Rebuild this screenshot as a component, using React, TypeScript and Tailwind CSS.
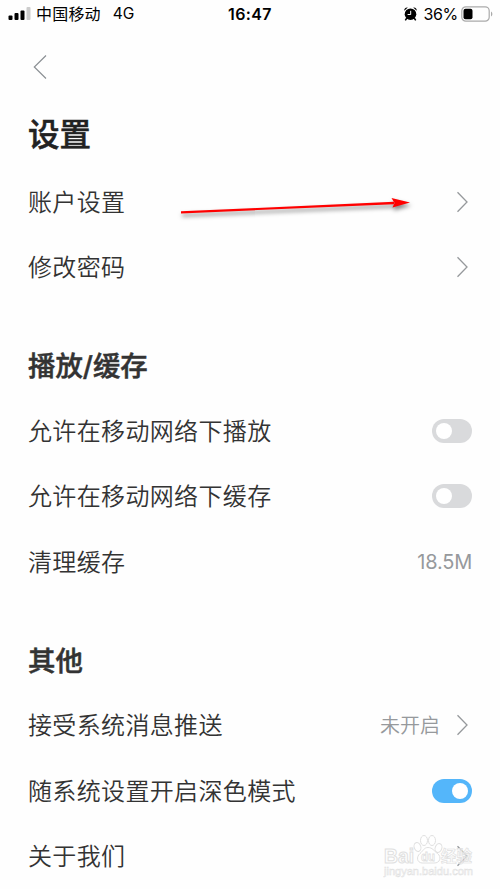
import type { ReactNode } from "react";

interface RowProps {
  label: string;
  children?: ReactNode;
}

export default function App() {
  return (
    <div className="relative flex h-[889px] w-[500px] flex-col overflow-hidden bg-[#fefefe] font-['Inter','Noto_Sans_CJK_SC',sans-serif] text-[#333]">
      <StatusBar />

      <header className="flex h-[73px] shrink-0 items-center pt-[5px] pl-[33px]">
        <button type="button" aria-label="返回">
          <svg width="14" height="26" viewBox="0 0 14 26" fill="none" stroke="#8b9094" strokeWidth="1.2">
            <path d="M13 1.500 1.300 13 13 24.500" />
          </svg>
        </button>
      </header>

      <main className="flex flex-col gap-[33px] pr-7 pl-7">
        <section>
          <h1 className="flex h-[68px] items-center text-[31.5px] font-medium text-[#222] [-webkit-text-stroke:0.5px]">
            设置
          </h1>
          <Row label="账户设置">
            <Chevron />
          </Row>
          <Row label="修改密码">
            <Chevron />
          </Row>
        </section>

        <section>
          <Heading>播放/缓存</Heading>
          <Row label="允许在移动网络下播放">
            <Toggle />
          </Row>
          <Row label="允许在移动网络下缓存">
            <Toggle />
          </Row>
          <Row label="清理缓存">
            <span className="text-[20px] tracking-[-0.2px] text-[#96999c]">18.5M</span>
          </Row>
        </section>

        <section>
          <Heading>其他</Heading>
          <Row label="接受系统消息推送">
            <span className="mr-[15px] pt-[2px] text-[20px] font-[350] text-[#96999c]">未开启</span>
            <Chevron />
          </Row>
          <Row label="随系统设置开启深色模式">
            <Toggle on />
          </Row>
          <Row label="关于我们">
            <Chevron />
          </Row>
        </section>
      </main>

      <Arrow />
      <Watermark />
    </div>
  );
}

function StatusBar() {
  return (
    <div className="grid h-7 shrink-0 grid-cols-[1fr_auto_1fr] items-center text-[16px] leading-7 text-black">
      <div className="flex items-center pl-2">
        <svg width="23" height="14" viewBox="0 0 23 14">
          <rect x="0.5" y="8.5" width="4" height="4.5" rx="1" />
          <rect x="6.5" y="6" width="4" height="7" rx="1" />
          <rect x="12.5" y="3.5" width="4" height="9.5" rx="1" />
          <rect x="18.5" y="0" width="4" height="13" rx="1" fill="#ccc" />
        </svg>
        <span className="ml-[5px] tracking-[0.2px]">中国移动</span>
        <span className="ml-[12px] text-[15.5px]">4G</span>
      </div>
      <span className="font-semibold tracking-[0.4px]">16:47</span>
      <div className="flex items-center justify-end pr-[6px]">
        <AlarmIcon />
        <span className="ml-[6px] tracking-[-0.3px]">36%</span>
        <svg className="ml-[3px]" width="33" height="16" viewBox="0 0 33 16">
          <rect x="0.8" y="0.8" width="27.4" height="14.4" rx="4" fill="none" stroke="#aaa" strokeWidth="1.2" />
          <rect x="2.5" y="2.7" width="9" height="10.6" rx="2" />
          <path d="M30 5.500c1.800.7 1.800 4.300 0 5z" fill="#aaa" />
        </svg>
      </div>
    </div>
  );
}

function AlarmIcon() {
  return (
    <svg width="13" height="14" viewBox="0 0 13 14">
      <circle cx="6.5" cy="7.2" r="5.8" />
      <path d="M.3 3.800C0 1.500 1.500.2 3.800.5zM12.700 3.800C13 1.500 11.500.2 9.200.5z" />
      <path d="m2.800 11-1.500 2.300M10.200 11l1.500 2.300" stroke="#000" strokeWidth="1.5" />
      <path d="M6.700 3.800v3.700H3.600" fill="none" stroke="#fff" strokeWidth="1" />
    </svg>
  );
}

function Heading({ children }: { children: ReactNode }) {
  return (
    <h2 className="flex h-[65.4px] items-center pt-[3px] text-[27.4px] font-medium [-webkit-text-stroke:0.5px]">
      {children}
    </h2>
  );
}

function Row({ label, children }: RowProps) {
  return (
    <div className="flex h-[65.4px] items-center">
      <span className="flex-1 pt-[2px] text-[24px] font-[350] tracking-[0.35px]">{label}</span>
      {children}
    </div>
  );
}

function Chevron() {
  return (
    <svg className="mr-[3px]" width="14" height="22" viewBox="0 0 14 22" fill="none" stroke="#96999c" strokeWidth="1.3">
      <path d="M2.500 1.200 12 11 2.500 20.800" />
    </svg>
  );
}

function Toggle({ on = false }: { on?: boolean }) {
  return (
    <button
      type="button"
      role="switch"
      aria-checked={on}
      className={`flex h-6 w-10 items-center rounded-full px-1 ${on ? "justify-end bg-[#54b6fa]" : "bg-[#d9dadc]"}`}
    >
      <span className="h-4 w-4 rounded-full bg-white" />
    </button>
  );
}

function Arrow() {
  return (
    <svg
      className="absolute top-[190px] left-[175px] drop-shadow-[1px_3px_2px_rgba(0,0,0,0.5)]"
      width="245"
      height="35"
      viewBox="0 0 245 35"
      fill="#f00"
    >
      <path d="M6 21.300 219 11.800v2.400L6 23.400z" />
      <path d="M216.500 8 235 12.500 217.500 17.500 219.500 13z" />
    </svg>
  );
}

function Watermark() {
  return (
    <div className="absolute top-[834px] left-[383px] h-[46px] w-[94px]">
      <svg width="94" height="46" viewBox="0 0 94 46" fill="#fff" fillOpacity="0.6" stroke="#e0e0e0" strokeWidth="1">
        <ellipse cx="34.500" cy="13" rx="3.300" ry="4.500" transform="rotate(-20 34.500 13)" />
        <ellipse cx="41" cy="6.500" rx="3.500" ry="5" />
        <ellipse cx="49" cy="6.500" rx="3.500" ry="5" />
        <ellipse cx="55.500" cy="14" rx="3.300" ry="4.500" transform="rotate(20 55.500 14)" />
        <path d="M45 13.500c-4 0-5 3.500-8 6-4 3.500-3 9 2 9.500 4 .3 8-.3 12 0 6 .3 8-6 3.500-9.500-3.500-2.500-5-6-9.500-6z" />
        <g fontFamily="Liberation Sans, Noto Sans CJK SC, sans-serif" fontWeight="bold">
          <text x="1" y="29" fontSize="20" textLength="30" lengthAdjust="spacingAndGlyphs">Bai</text>
          <text x="38" y="27" fontSize="13" textLength="14" lengthAdjust="spacingAndGlyphs" strokeWidth="0.8">du</text>
          <text x="58" y="28" fontSize="15.5" textLength="31" strokeWidth="0.7">经验</text>
          <text x="1" y="41" fontSize="10.5" fontWeight="normal" textLength="89" lengthAdjust="spacingAndGlyphs" strokeWidth="0.5">jingyan.baidu.com</text>
        </g>
      </svg>
    </div>
  );
}
